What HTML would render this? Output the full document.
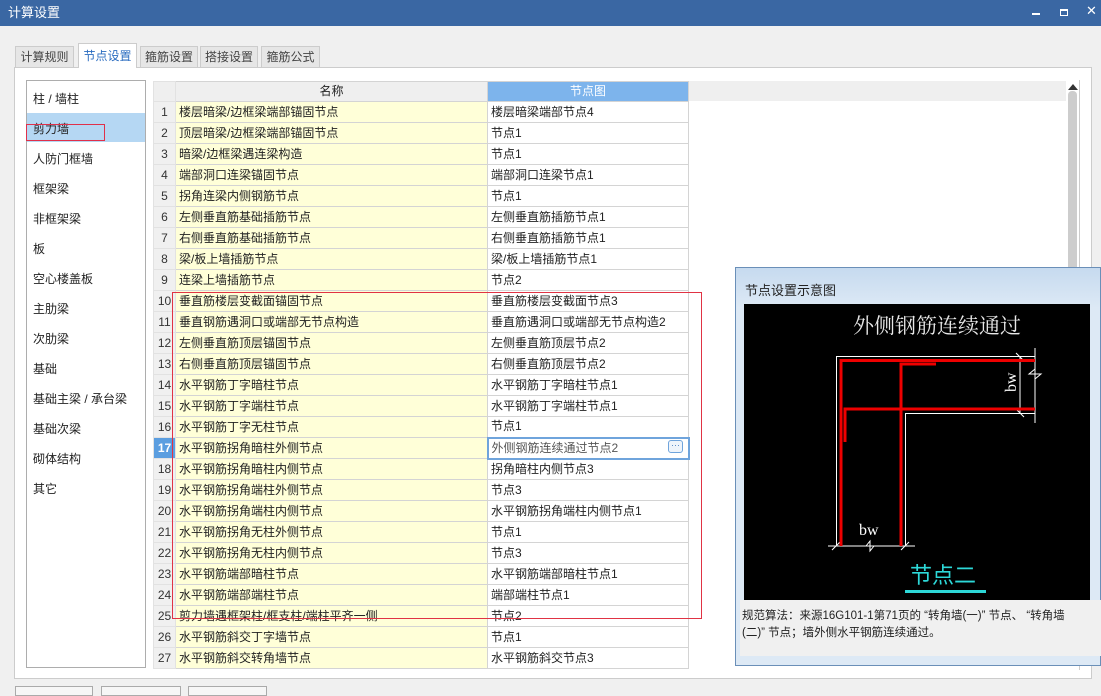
<!DOCTYPE html>
<html><head><meta charset="utf-8">
<style>
*{margin:0;padding:0;box-sizing:border-box}
body{width:1101px;height:690px;overflow:hidden;background:#f0f0f0;font-family:"Liberation Sans","Noto Sans CJK SC",sans-serif;font-size:12px;color:#222;position:relative}
.abs{position:absolute}
#title{left:0;top:0;width:1101px;height:26px;background:#3a67a3;color:#fff;font-size:13px;line-height:25px;padding-left:8px}
.tab{position:absolute;top:46px;height:21px;border:1px solid #ccc;border-bottom:none;background:#e6e6e6;color:#444;line-height:20px;text-align:center;font-size:12px}
.tab.sel{top:43px;height:25px;background:#fff;color:#2a6cc0;line-height:24px}
#panel{left:14px;top:67px;width:1078px;height:612px;border:1px solid #ccc;background:#fff}
#list{left:26px;top:80px;width:120px;height:588px;border:1px solid #adadad;background:#fff}
.li{position:absolute;left:6px;font-size:12px;color:#222}
table{border-collapse:collapse;table-layout:fixed;position:absolute;left:153px;top:81px}
td{height:21px;border:1px solid #d4d4d4;font-size:12px;padding:0 3px;white-space:nowrap;overflow:hidden;line-height:19px}
td.n{background:#f0f0f0;text-align:center;color:#333;padding:0;border-color:#e2e2e2}
td.a{background:#ffffd8}
td.b{background:#fff}
tr.h td{background:#efefef;text-align:center;height:20px}
tr.h td.hb{background:#7db4ec;color:#fff}
.btn{position:absolute;top:686px;height:10px;border:1px solid #aaa;background:#f6f6f6}
</style></head><body>
<div id="title" class="abs">计算设置</div>
<div class="abs" style="left:1032px;top:13px;width:8px;height:2px;background:#fff"></div>
<div class="abs" style="left:1060px;top:9px;width:8px;height:7px;border:1px solid #fff;border-top-width:2px"></div>
<div class="abs" style="left:1086px;top:4px;color:#fff;font-size:13px;line-height:14px">✕</div>

<div id="panel" class="abs"></div>
<div class="tab" style="left:15px;width:59px">计算规则</div>
<div class="tab sel" style="left:78px;width:59px">节点设置</div>
<div class="tab" style="left:140px;width:58px">箍筋设置</div>
<div class="tab" style="left:200px;width:58px">搭接设置</div>
<div class="tab" style="left:261px;width:59px">箍筋公式</div>

<div id="list" class="abs">
<div class="abs" style="left:0;top:32px;width:118px;height:29px;background:#b5d7f3"></div>
<div class="li" style="top:9px">柱 / 墙柱</div>
<div class="li" style="top:39px">剪力墙</div>
<div class="li" style="top:69px">人防门框墙</div>
<div class="li" style="top:99px">框架梁</div>
<div class="li" style="top:129px">非框架梁</div>
<div class="li" style="top:159px">板</div>
<div class="li" style="top:189px">空心楼盖板</div>
<div class="li" style="top:219px">主肋梁</div>
<div class="li" style="top:249px">次肋梁</div>
<div class="li" style="top:279px">基础</div>
<div class="li" style="top:309px">基础主梁 / 承台梁</div>
<div class="li" style="top:339px">基础次梁</div>
<div class="li" style="top:369px">砌体结构</div>
<div class="li" style="top:399px">其它</div>
</div>
<div class="abs" style="left:26px;top:124px;width:79px;height:17px;border:1px solid #e0304a"></div>

<div class="abs" style="left:153px;top:81px;width:913px;height:20px;background:#efefef"></div>
<table>
<colgroup><col style="width:22px"><col style="width:312px"><col style="width:201px"></colgroup>
<tr class="h"><td class="n" style="background:#efefef;height:19px"></td><td style="height:19px">名称</td><td class="hb" style="height:19px">节点图</td></tr>
<tr><td class="n">1</td><td class="a">楼层暗梁/边框梁端部锚固节点</td><td class="b">楼层暗梁端部节点4</td></tr>
<tr><td class="n">2</td><td class="a">顶层暗梁/边框梁端部锚固节点</td><td class="b">节点1</td></tr>
<tr><td class="n">3</td><td class="a">暗梁/边框梁遇连梁构造</td><td class="b">节点1</td></tr>
<tr><td class="n">4</td><td class="a">端部洞口连梁锚固节点</td><td class="b">端部洞口连梁节点1</td></tr>
<tr><td class="n">5</td><td class="a">拐角连梁内侧钢筋节点</td><td class="b">节点1</td></tr>
<tr><td class="n">6</td><td class="a">左侧垂直筋基础插筋节点</td><td class="b">左侧垂直筋插筋节点1</td></tr>
<tr><td class="n">7</td><td class="a">右侧垂直筋基础插筋节点</td><td class="b">右侧垂直筋插筋节点1</td></tr>
<tr><td class="n">8</td><td class="a">梁/板上墙插筋节点</td><td class="b">梁/板上墙插筋节点1</td></tr>
<tr><td class="n">9</td><td class="a">连梁上墙插筋节点</td><td class="b">节点2</td></tr>
<tr><td class="n">10</td><td class="a">垂直筋楼层变截面锚固节点</td><td class="b">垂直筋楼层变截面节点3</td></tr>
<tr><td class="n">11</td><td class="a">垂直钢筋遇洞口或端部无节点构造</td><td class="b">垂直筋遇洞口或端部无节点构造2</td></tr>
<tr><td class="n">12</td><td class="a">左侧垂直筋顶层锚固节点</td><td class="b">左侧垂直筋顶层节点2</td></tr>
<tr><td class="n">13</td><td class="a">右侧垂直筋顶层锚固节点</td><td class="b">右侧垂直筋顶层节点2</td></tr>
<tr><td class="n">14</td><td class="a">水平钢筋丁字暗柱节点</td><td class="b">水平钢筋丁字暗柱节点1</td></tr>
<tr><td class="n">15</td><td class="a">水平钢筋丁字端柱节点</td><td class="b">水平钢筋丁字端柱节点1</td></tr>
<tr><td class="n">16</td><td class="a">水平钢筋丁字无柱节点</td><td class="b">节点1</td></tr>
<tr><td class="n" style="background:#5b9ee0;color:#fff;font-weight:bold">17</td><td class="a">水平钢筋拐角暗柱外侧节点</td><td class="b" style="border:2px solid #6fa4dc;color:#555">外侧钢筋连续通过节点2</td></tr>
<tr><td class="n">18</td><td class="a">水平钢筋拐角暗柱内侧节点</td><td class="b">拐角暗柱内侧节点3</td></tr>
<tr><td class="n">19</td><td class="a">水平钢筋拐角端柱外侧节点</td><td class="b">节点3</td></tr>
<tr><td class="n">20</td><td class="a">水平钢筋拐角端柱内侧节点</td><td class="b">水平钢筋拐角端柱内侧节点1</td></tr>
<tr><td class="n">21</td><td class="a">水平钢筋拐角无柱外侧节点</td><td class="b">节点1</td></tr>
<tr><td class="n">22</td><td class="a">水平钢筋拐角无柱内侧节点</td><td class="b">节点3</td></tr>
<tr><td class="n">23</td><td class="a">水平钢筋端部暗柱节点</td><td class="b">水平钢筋端部暗柱节点1</td></tr>
<tr><td class="n">24</td><td class="a">水平钢筋端部端柱节点</td><td class="b">端部端柱节点1</td></tr>
<tr><td class="n">25</td><td class="a">剪力墙遇框架柱/框支柱/端柱平齐一侧</td><td class="b">节点2</td></tr>
<tr><td class="n">26</td><td class="a">水平钢筋斜交丁字墙节点</td><td class="b">节点1</td></tr>
<tr><td class="n">27</td><td class="a">水平钢筋斜交转角墙节点</td><td class="b">水平钢筋斜交节点3</td></tr>
</table>
<div class="abs" style="left:668px;top:440px;width:15px;height:13px;border:1px solid #6fa4dc;border-radius:3px;background:#eef4fb;font-size:9px;line-height:9px;text-align:center;color:#4a7fc0">···</div>

<div class="abs" style="left:1079px;top:80px;width:1px;height:590px;background:#ccc"></div>
<div class="abs" style="left:1068px;top:84px;width:0;height:0;border-left:5px solid transparent;border-right:5px solid transparent;border-bottom:6px solid #333"></div>
<div class="abs" style="left:1068px;top:91px;width:9px;height:180px;background:#cdcdcd;border-radius:4px"></div>

<div class="abs" style="left:172px;top:292px;width:530px;height:327px;border:1px solid #e03344"></div>

<!-- popup -->
<div class="abs" style="left:735px;top:267px;width:366px;height:399px;border:1px solid #6a8fb8;background:linear-gradient(#c6daef,#dde9f5 40px,#dde9f5);"></div>
<div class="abs" style="left:745px;top:280px;font-size:13px;color:#222">节点设置示意图</div>
<div class="abs" style="left:740px;top:600px;width:361px;height:56px;background:#f0f0f0"></div>
<div class="abs" style="left:742px;top:608px;width:359px;font-size:11.5px;line-height:17px;color:#222;white-space:nowrap;overflow:hidden">规范算法：来源16G101-1第71页的 “转角墙(一)” 节点、 “转角墙<br>(二)” 节点；墙外侧水平钢筋连续通过。</div>
<svg class="abs" style="left:0;top:0" width="1101" height="690">
<rect x="744" y="304" width="346" height="296" fill="#000"/>
<text x="937" y="333" font-size="21" fill="#e8e8e8" text-anchor="middle" font-family="'Noto Serif CJK SC',serif">外侧钢筋连续通过</text>
<g stroke="#fff" stroke-width="1" fill="none">
<path d="M836.5 546 V356.5 H1035"/>
<path d="M905.5 546 V413.5 H1035"/>
<path d="M828 546 H915"/>
<path d="M1035 348 V423"/>
<path d="M1020 357 V413"/>
<path d="M1016 353 l8 8 M1016 409 l8 8 M832 550 l8 -8 M901 550 l8 -8 M866 546 l4 -5 l0 10 l4 -5 M1035 379 l6 -5 l-12 0 l6 -5"/>
</g>
<g stroke="#e00" stroke-width="3" fill="none">
<path d="M841 546 V360.5 H1035"/>
<path d="M901 546 V364 H936"/>
<path d="M845 442 V409 H1035"/>
</g>
<text x="859" y="535" font-size="16" fill="#fff" font-family="'Liberation Serif',serif">bw</text>
<text x="1016" y="392" font-size="16" fill="#fff" font-family="'Liberation Serif',serif" transform="rotate(-90 1016 392)">bw</text>
<text x="943" y="583" font-size="22" fill="#2dd8d8" text-anchor="middle" font-family="'Noto Sans CJK SC',sans-serif">节点二</text>
<rect x="905" y="590" width="81" height="3" fill="#2dd8d8"/>
</svg>

<div class="btn" style="left:15px;width:78px"></div>
<div class="btn" style="left:101px;width:80px"></div>
<div class="btn" style="left:188px;width:79px"></div>
</body></html>
